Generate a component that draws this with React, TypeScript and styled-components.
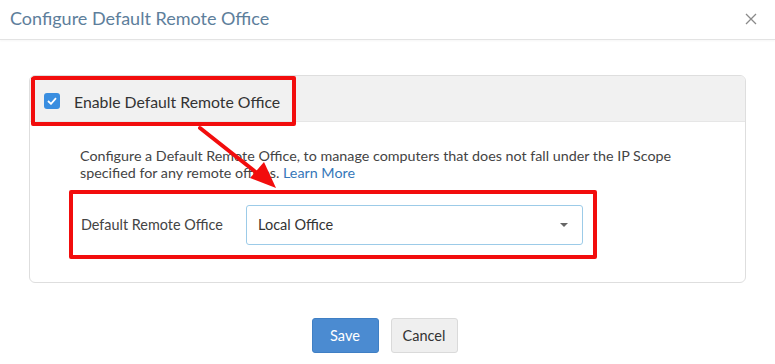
import styled, { createGlobalStyle } from "styled-components";

const GlobalStyle = createGlobalStyle`
  html, body {
    margin: 0;
    padding: 0;
    background: #ffffff;
  }
  body {
    font-family: Lato, "Open Sans", "Liberation Sans", sans-serif;
    color: #333;
  }
`

const Dialog = styled.div`
  position: relative;
  width: 775px;
  height: 364px;
  background: #fff;
  overflow: hidden;
`

const Header = styled.div`
  height: 40px;
  display: flex;
  justify-content: space-between;
  align-items: center;
  padding: 0 10px;
  border-bottom: 1px solid #e3e3e3;
  box-sizing: border-box;
  box-shadow: 0 1px 2px rgba(0, 0, 0, 0.04);
`

const Title = styled.h3`
  margin: 0 0 3px 0;
  font-size: 18px;
  font-weight: 400;
  color: #5d7e9b;
`

const Close = styled.button`
  border: none;
  background: none;
  padding: 0;
  margin: 0 8px 2px 0;
  width: 12px;
  height: 12px;
  display: flex;
  cursor: pointer;
`

const Body = styled.div`
  padding: 35px 29px 0;
`

const Panel = styled.div`
  border: 1px solid #dedede;
  border-radius: 6px;
  overflow: hidden;
`

const PanelHead = styled.div`
  height: 46px;
  background: #f1f1f1;
  border-bottom: 1px solid #e6e6e6;
  box-sizing: border-box;
  display: flex;
  align-items: flex-start;
  padding-left: 1px;
`

const Highlight = styled.div`
  width: fit-content;
  border: 4px solid #f20d0d;
  border-radius: 2px;
  box-sizing: border-box;
  display: flex;
  align-items: center;
`

const CheckLabel = styled.label`
  height: 42px;
  display: flex;
  align-items: center;
  gap: 14px;
  padding: 0 12px 0 9px;
  font-size: 15.8px;
  color: #333;
`

const Box = styled.span`
  width: 16px;
  height: 16px;
  border-radius: 3px;
  background: #3a8ee0;
  display: flex;
  align-items: center;
  justify-content: center;
`

const PanelBody = styled.div`
  padding: 25px 0 23px 39px;
`

const Desc = styled.p`
  margin: 0 0 9px 11px;
  font-size: 14.3px;
  line-height: 17px;
  color: #444;
  width: 605px;
`

const Link = styled.a`
  color: #3577b9;
  text-decoration: none;
`

const FormRow = styled.div`
  width: 520px;
  height: 61px;
  display: flex;
  align-items: center;
  padding: 0 10px 0 8px;
  box-sizing: border-box;
`

const Label = styled.span`
  width: 165px;
  font-size: 14.4px;
  color: #444;
`

const Select = styled.div`
  flex: 1;
  height: 40px;
  border: 1px solid #9ccbe8;
  border-radius: 3px;
  box-sizing: border-box;
  display: flex;
  align-items: center;
  justify-content: space-between;
  padding: 0 14px 0 11px;
  font-size: 14.5px;
  color: #333;
`

const Caret = styled.span`
  width: 0;
  height: 0;
  border-left: 4px solid transparent;
  border-right: 4px solid transparent;
  border-top: 4px solid #666;
`

const Footer = styled.div`
  display: flex;
  justify-content: center;
  gap: 12px;
  padding: 35px 6px 0 0;
`

const Button = styled.button<{ $primary?: boolean }>`
  width: 67px;
  height: 35px;
  border-radius: 3px;
  font-family: inherit;
  font-size: 14.5px;
  border: 1px solid ${p => (p.$primary ? "#3f7fc4" : "#dadada")};
  background: ${p => (p.$primary ? "#4b8bd1" : "#efefef")};
  color: ${p => (p.$primary ? "#fff" : "#333")};
`

const Arrow = styled.svg`
  position: absolute;
  left: 0;
  top: 0;
  pointer-events: none;
`

const App = () => {
  return (
    <>
      <GlobalStyle />
      <Dialog>
        <Header>
          <Title>Configure Default Remote Office</Title>
          <Close aria-label="close">
            <svg width="12" height="12" viewBox="0 0 12 12">
              <path d="M1 1 L11 11 M11 1 L1 11" stroke="#8a8a8a" strokeWidth="1.3" />
            </svg>
          </Close>
        </Header>
        <Body>
          <Panel>
            <PanelHead>
              <Highlight>
                <CheckLabel>
                  <Box>
                    <svg width="10" height="8" viewBox="0 0 10 8">
                      <path d="M1 4 L4 6.8 L9 1.2" stroke="#fff" strokeWidth="1.8" fill="none" />
                    </svg>
                  </Box>
                  Enable Default Remote Office
                </CheckLabel>
              </Highlight>
            </PanelHead>
            <PanelBody>
              <Desc>
                Configure a Default Remote Office, to manage computers that does not fall under the IP Scope
                specified for any remote offices. <Link href="#">Learn More</Link>
              </Desc>
              <Highlight>
                <FormRow>
                  <Label>Default Remote Office</Label>
                  <Select>
                    Local Office
                    <Caret />
                  </Select>
                </FormRow>
              </Highlight>
            </PanelBody>
          </Panel>
          <Footer>
            <Button $primary>Save</Button>
            <Button>Cancel</Button>
          </Footer>
        </Body>
        <Arrow width="775" height="364" viewBox="0 0 775 364">
          <line x1="200" y1="128" x2="262" y2="177" stroke="#f20d0d" strokeWidth="4" strokeLinecap="round" />
          <polygon points="276,188 250,178 264,162" fill="#f20d0d" />
        </Arrow>
      </Dialog>
    </>
  )
}

export default App
